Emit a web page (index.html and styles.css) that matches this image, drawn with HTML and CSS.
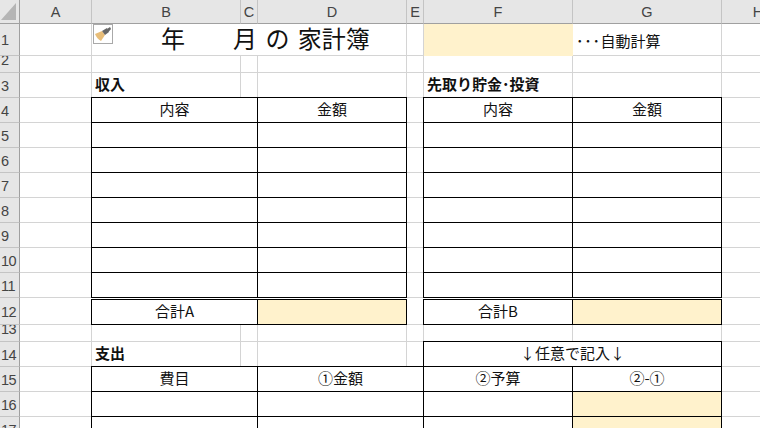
FILE: index.html
```html
<!DOCTYPE html>
<html lang="ja">
<head>
<meta charset="utf-8">
<title>家計簿</title>
<link rel="stylesheet" href="styles.css">
</head>
<body>
<div class="sheet">
  <div class="hd corner"><svg class="corner-mark" width="19" height="23" viewBox="0 0 19 23"><polygon points="16,3 16,20 1,20" fill="#b5b5b5"/></svg></div>
  <div class="hd">A</div><div class="hd">B</div><div class="hd">C</div><div class="hd">D</div><div class="hd">E</div><div class="hd">F</div><div class="hd">G</div><div class="hd last">H</div>

  <div class="rh">1</div><div class="c"></div>
  <div class="c title s3">年　　月 の 家計簿<span class="note-icon"><svg width="18" height="18" viewBox="0 0 18 18"><path d="M1 9 L8 6 L11 10 L7 16 Q3 14 1 9Z" fill="#e8bd78"/><path d="M8 6 L13 3 L15 7 L11 10Z" fill="#666"/><path d="M13 4 L16 2 L17 4 L14.500 7Z" fill="#666"/></svg></span></div>
  <div class="c"></div><div class="c fill noline"></div><div class="c text-left"><span class="dots">･･･</span>自動計算</div><div class="c"></div>

  <div class="rh short">2</div><div class="c"></div><div class="c"></div><div class="c"></div><div class="c"></div><div class="c"></div><div class="c"></div><div class="c"></div><div class="c"></div>

  <div class="rh">3</div><div class="c"></div><div class="c label">収入</div><div class="c"></div><div class="c"></div><div class="c"></div><div class="c label">先取り貯金･投資</div><div class="c"></div><div class="c"></div>

  <div class="rh">4</div><div class="c"></div><div class="c t lft s2 top">内容</div><div class="c t top">金額</div><div class="c"></div><div class="c t lft top">内容</div><div class="c t top">金額</div><div class="c"></div>
  <div class="rh">5</div><div class="c"></div><div class="c t lft s2"></div><div class="c t"></div><div class="c"></div><div class="c t lft"></div><div class="c t"></div><div class="c"></div>
  <div class="rh">6</div><div class="c"></div><div class="c t lft s2"></div><div class="c t"></div><div class="c"></div><div class="c t lft"></div><div class="c t"></div><div class="c"></div>
  <div class="rh">7</div><div class="c"></div><div class="c t lft s2"></div><div class="c t"></div><div class="c"></div><div class="c t lft"></div><div class="c t"></div><div class="c"></div>
  <div class="rh">8</div><div class="c"></div><div class="c t lft s2"></div><div class="c t"></div><div class="c"></div><div class="c t lft"></div><div class="c t"></div><div class="c"></div>
  <div class="rh">9</div><div class="c"></div><div class="c t lft s2"></div><div class="c t"></div><div class="c"></div><div class="c t lft"></div><div class="c t"></div><div class="c"></div>
  <div class="rh">10</div><div class="c"></div><div class="c t lft s2"></div><div class="c t"></div><div class="c"></div><div class="c t lft"></div><div class="c t"></div><div class="c"></div>
  <div class="rh">11</div><div class="c"></div><div class="c t lft s2"></div><div class="c t"></div><div class="c"></div><div class="c t lft"></div><div class="c t"></div><div class="c"></div>
  <div class="rh">12</div><div class="c"></div><div class="c t lft s2 dbl">合計A</div><div class="c t dbl fill"></div><div class="c"></div><div class="c t lft dbl">合計B</div><div class="c t dbl fill"></div><div class="c"></div>

  <div class="rh short">13</div><div class="c"></div><div class="c"></div><div class="c"></div><div class="c"></div><div class="c"></div><div class="c"></div><div class="c"></div><div class="c"></div>

  <div class="rh">14</div><div class="c"></div><div class="c label">支出</div><div class="c"></div><div class="c"></div><div class="c"></div><div class="c t lft s2 top">↓任意で記入↓</div><div class="c"></div>

  <div class="rh">15</div><div class="c"></div><div class="c t lft s2 top">費目</div><div class="c t s2 top">①金額</div><div class="c t">②予算</div><div class="c t">②-①</div><div class="c"></div>
  <div class="rh">16</div><div class="c"></div><div class="c t lft s2"></div><div class="c t s2"></div><div class="c t"></div><div class="c t fill"></div><div class="c"></div>
  <div class="rh">17</div><div class="c"></div><div class="c t lft s2"></div><div class="c t s2"></div><div class="c t"></div><div class="c t fill"></div><div class="c"></div>
</div>
</body>
</html>
```
FILE: styles.css
```css
html, body {
  margin: 0;
  padding: 0;
  width: 760px;
  height: 428px;
  overflow: hidden;
  background: #fff;
}
.sheet {
  display: grid;
  grid-template-columns: 20px 72px 149px 17px 149px 17px 149px 149px 72px;
  grid-template-rows: 24px 32px 17px 25px repeat(8, 25px) 27px 17px 25px 25px 25px 25px;
  font-family: "Noto Sans CJK JP", "Noto Sans", sans-serif;
  font-size: 15px;
  color: #111;
}
.hd, .rh {
  background: #e6e6e6;
  color: #444;
  font-family: "Liberation Sans", sans-serif;
  font-size: 14.500px;
  display: flex;
  align-items: center;
  justify-content: center;
  box-sizing: border-box;
  overflow: hidden;
}
.hd {
  border-right: 1px solid #c4c4c4;
  border-bottom: 1px solid #a0a0a0;
  padding-top: 1px;
}
.hd.last { border-right: 0; }
.rh {
  border-right: 1px solid #a0a0a0;
  border-bottom: 1px solid #c4c4c4;
  justify-content: flex-start;
  padding-left: 1px;
  padding-top: 1px;
  letter-spacing: -0.500px;
}
.rh.short {
  align-items: flex-start;
  line-height: 8px;
  padding-top: 0;
}
.corner { position: relative; border-right-color: #a0a0a0; }
.corner-mark { display: block; position: absolute; left: 0; top: 0; }
.c {
  box-sizing: border-box;
  border-right: 1px solid #d4d4d4;
  border-bottom: 1px solid #d4d4d4;
  display: flex;
  align-items: center;
  justify-content: center;
  white-space: nowrap;
  min-width: 0;
  padding-bottom: 4px;
}
.s2 { grid-column: span 2; }
.s3 { grid-column: span 3; }
.title {
  position: relative;
  justify-content: flex-start;
  padding-left: 69px;
  padding-bottom: 4px;
  font-size: 24px;
  word-spacing: 3px;
}
.note-icon {
  position: absolute;
  left: 1px;
  top: 0;
  width: 20px;
  height: 20px;
  box-sizing: border-box;
  border: 1px solid #a9a9a9;
  background: #fff;
  display: block;
}
.note-icon svg { display: block; }
.fill { background: #fff2cc; }
.noline { border-color: #fff2cc; }
.text-left {
  justify-content: flex-start;
  padding-left: 3px;
  padding-bottom: 0;
  padding-top: 2px;
}
.dots { letter-spacing: 0.700px; }
.label {
  justify-content: flex-start;
  padding-left: 3px;
  font-weight: 700;
}
.t {
  border-right: 1px solid #000;
  border-bottom: 1px solid #000;
}
.lft { border-left: 1px solid #000; margin-left: -1px; }
.top { border-top: 1px solid #000; margin-top: -1px; }
.dbl { position: relative; padding-top: 2px; padding-bottom: 3px; }
.dbl::before {
  content: "";
  position: absolute;
  left: -1px;
  right: -1px;
  top: 0;
  height: 1px;
  background: #fff;
  border-bottom: 1px solid #000;
}
```
